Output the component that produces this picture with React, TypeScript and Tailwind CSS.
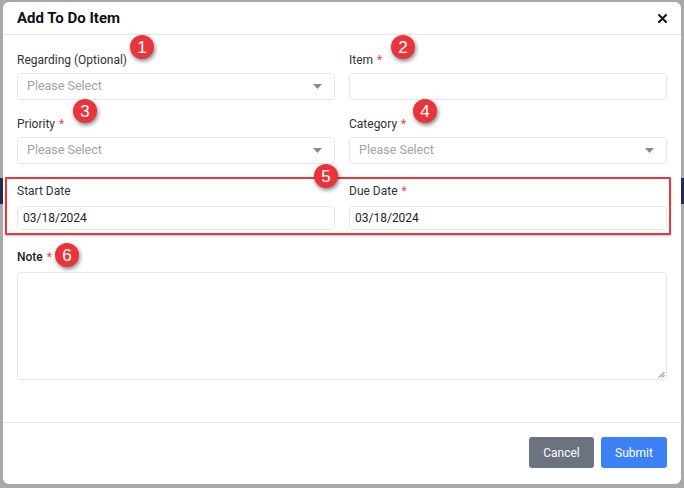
import React from 'react';

function Badge({ n, className }: { n: number; className: string }) {
  return (
    <span
      className={`absolute flex h-[24px] w-[24px] items-center justify-center rounded-full bg-[#e8353b] font-['Liberation_Sans',sans-serif] text-[17px] leading-none text-white shadow-[1px_2px_4px_rgba(0,0,0,0.5)] ${className}`}
    >
      {n}
    </span>
  );
}

function Label({ text, required }: { text: string; required?: boolean }) {
  return (
    <div className="h-[20px] text-[12px] leading-[20px] text-[#333]">
      {text}
      {required && <span className="ml-[4px] text-[#e5484d]">*</span>}
    </div>
  );
}

function Select() {
  return (
    <div className="mt-[3px] flex h-[27px] items-center justify-between rounded-[4px] border border-[#e5e7eb] pl-[9px] pr-[12px]">
      <span className="text-[12.5px] text-[#a3a3a3]">Please Select</span>
      <svg width="9" height="5" viewBox="0 0 9 5">
        <path d="M0 0h9L4.5 5z" fill="#8a8a8a" />
      </svg>
    </div>
  );
}

function Input({ value }: { value?: string }) {
  return (
    <div className="mt-[3px] flex h-[27px] items-center rounded-[4px] border border-[#e5e7eb] pl-[5px] text-[12px] text-[#222]">
      {value}
    </div>
  );
}

export default function App() {
  return (
    <div className="relative h-[488px] w-[684px] overflow-hidden bg-[#a9a9a9] font-['Roboto',sans-serif]">
      {/* page behind the overlay */}
      <div className="absolute left-0 top-[178px] h-[26px] w-full bg-[#1f2b52]" />

      <div className="relative ml-[3px] mt-[2px] flex h-[482px] w-[678px] flex-col rounded-[6px] bg-white">
        {/* Header */}
        <div className="flex h-[33px] items-center justify-between border-b border-[#e6e6e6] pl-[14px] pr-[14px]">
          <h1 className="text-[15px] font-bold text-[#111]">Add To Do Item</h1>
          <svg width="9" height="9" viewBox="0 0 9 9">
            <path d="M1 1l7 7M8 1L1 8" stroke="#111" strokeWidth="2" strokeLinecap="round" />
          </svg>
        </div>

        {/* Body */}
        <div className="relative flex-1 px-[14px] pt-[15px]">
          <div className="grid grid-cols-2 gap-x-[14px]">
            <div className="relative">
              <Label text="Regarding (Optional)" />
              <Select />
              <Badge n={1} className="left-[113px] top-[-15px]" />
            </div>
            <div className="relative">
              <Label text="Item" required />
              <Input />
              <Badge n={2} className="left-[42px] top-[-15px]" />
            </div>
            <div className="relative mt-[14px]">
              <Label text="Priority" required />
              <Select />
              <Badge n={3} className="left-[56px] top-[-15px]" />
            </div>
            <div className="relative mt-[14px]">
              <Label text="Category" required />
              <Select />
              <Badge n={4} className="left-[64px] top-[-15px]" />
            </div>
          </div>

          <div className="relative -ml-[12px] -mr-[4px] mt-[13px] rounded-[1px] border-2 border-[#e5383f] pb-[3px] pl-[10px] pr-[2px] pt-[2px] shadow-[0_1px_2px_rgba(0,0,0,0.25)]">
            <div className="grid grid-cols-2 gap-x-[14px]">
              <div>
                <Label text="Start Date" />
                <div className="mt-[5px] flex h-[24px] items-center rounded-[4px] border border-[#e5e7eb] pl-[5px] text-[12px] text-[#222]">
                  03/18/2024
                </div>
              </div>
              <div>
                <Label text="Due Date" required />
                <div className="mt-[5px] flex h-[24px] items-center rounded-[4px] border border-[#e5e7eb] pl-[5px] text-[12px] text-[#222]">
                  03/18/2024
                </div>
              </div>
            </div>
            <Badge n={5} className="left-[307px] top-[-15px]" />
          </div>

          <div className="relative mt-[12px]">
            <div className="h-[20px] text-[12px] font-medium leading-[20px] text-[#222]">
              Note<span className="ml-[4px] font-normal text-[#e5484d]">*</span>
            </div>
            <Badge n={6} className="left-[38px] top-[-4px]" />
            <div className="relative mt-[5px] h-[108px] rounded-[4px] border border-[#e5e7eb]">
              <svg className="absolute bottom-[1px] right-[1px]" width="7" height="7" viewBox="0 0 7 7">
                <path d="M6.5 1L1 6.5M6.5 4L4 6.5" stroke="#555" strokeWidth="1" />
              </svg>
            </div>
          </div>
        </div>

        {/* Footer */}
        <div className="flex h-[62px] items-center justify-end gap-[7px] border-t border-[#e6e6e6] pb-[2px] pr-[14px]">
          <button className="h-[31px] w-[65px] rounded-[3px] bg-[#6b7280] text-[12px] text-white">
            Cancel
          </button>
          <button className="h-[31px] w-[66px] rounded-[3px] bg-[#3b82f6] text-[12px] text-white">
            Submit
          </button>
        </div>
      </div>
    </div>
  );
}
